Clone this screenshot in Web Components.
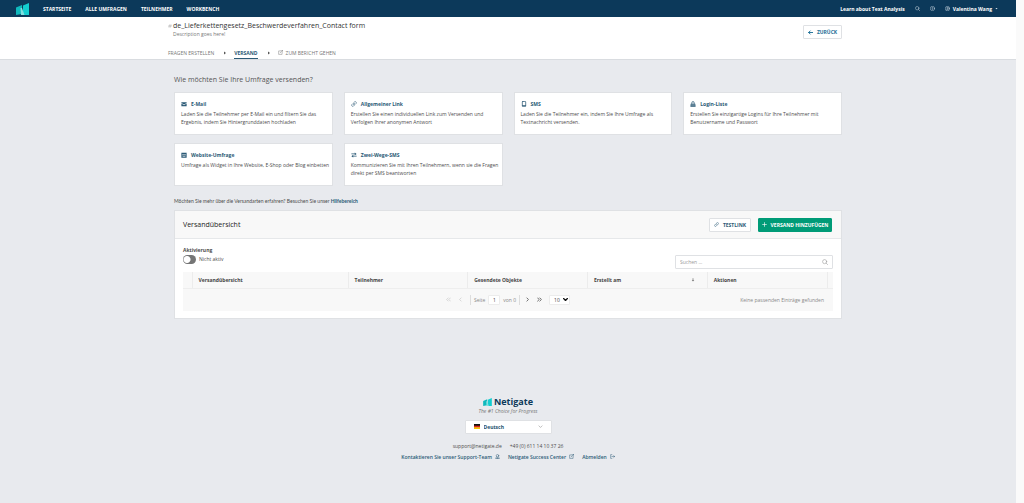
<!DOCTYPE html>
<html lang="de">
<head>
<meta charset="utf-8">
<meta name="viewport" content="width=device-width, initial-scale=1">
<title>Netigate – Versand</title>
<style>
html, body { margin: 0; min-height: 100%; }
body { font-family: "Open Sans", "Noto Sans", sans-serif; font-size: 5px; line-height: 8px; color: #4d4d4d; background: #e8eaee;
  --navy: #0c395a; --link: #2b5a76; --green: #009b77; --line: #dfe1e4; --soft: #f8f8f8; }
</style>
</head>
<body>
<survey-app></survey-app>
<script>
const define = (name, html, init) => {
  const template = document.createElement('template');
  template.innerHTML = html;
  customElements.define(name, class extends HTMLElement {
    constructor() {
      super();
      this.attachShadow({ mode: 'open' }).append(template.content.cloneNode(true));
    }
    connectedCallback() { if (init) init.call(this, this.shadowRoot); }
  });
};

const stroke = (width = 1.5) => `fill="none" stroke="currentColor" stroke-width="${width}" stroke-linecap="round" stroke-linejoin="round"`;
const S = stroke();
const icons = {
  mail: '<path fill="currentColor" d="M1 3h14v2L8 9.500 1 5zM1 6.500l7 4.500 7-4.500V14H1z"/>',
  link: `<g ${S}><path d="M6.500 9.500a3 3 0 0 0 4.200 0l3-3a3 3 0 0 0-4.200-4.200L8 3.800"/><path d="M9.500 6.500a3 3 0 0 0-4.200 0l-3 3a3 3 0 0 0 4.200 4.200L8 12.200"/></g>`,
  phone: `<g ${stroke(2)}><rect x="3.500" y="1" width="9" height="14" rx="1.500"/><path d="M4 12h8"/></g>`,
  lock: '<path fill="currentColor" d="M4 7V4.500a4 4 0 0 1 8 0V7h2l1 8H1l1-8zm2 0h4V4.500a2 2 0 0 0-4 0zM3 10v1h10v-1z"/>',
  site: '<path fill="currentColor" fill-rule="evenodd" d="M1 2h14v13H1zM3 5v1.500h10V5zM3 10v1h3l1 1.500h2l1-1.500h3v-1z"/>',
  swap: '<path fill="currentColor" d="M1 4h9V1.500L15 5l-5 3.500V6H1zM15 10H6V7.500L1 11l5 3.500V12h9z"/>',
  search: `<g ${S}><circle cx="7" cy="7" r="5.500"/><path d="m11 11 4 4"/></g>`,
  help: `<g ${S}><circle cx="8" cy="8" r="7"/><path d="M6 6.500a2 2 0 1 1 2 2.500m0 2.500v.2"/></g>`,
  user: `<g ${S}><circle cx="8" cy="8" r="7"/><circle cx="8" cy="6.500" r="2.300"/><path d="M4 13c1-3 7-3 8 0"/></g>`,
  support: `<g ${S}><circle cx="8" cy="5.500" r="4"/><path d="M5.500 9.500C2.500 10.500 2 12 2 14.500h12c0-2.500-.5-4-3.500-5M6.500 14v-2h3v2"/></g>`,
  ext: `<g ${S}><path d="M8 3H2v11h11V8M10 1h5v5M15 1 7 9"/></g>`,
  exit: `<g ${S}><path d="M6 2H2v12h4M6 8h9M12 5l3 3-3 3"/></g>`,
  back: `<path ${stroke(3)} d="M15 8H2M7 3 2 8l5 5"/>`,
  plus: `<path ${stroke(2)} d="M8 2v12M2 8h12"/>`,
  down: `<path ${stroke(2)} d="m3 6 5 5 5-5"/>`,
  downBold: `<path ${stroke(4)} d="m2 5 6 6 6-6"/>`,
  caret: '<path fill="currentColor" d="M2 5h12l-6 7z"/>',
  play: '<path fill="currentColor" d="M4 2v12l8-6z"/>',
  sort: '<path fill="currentColor" d="M6.500 1h3v7H13l-5 6-5-6h3.500z"/>',
  first: `<path ${stroke(2)} d="M7 3 2 8l5 5M14 3 9 8l5 5"/>`,
  prev: `<path ${stroke(2)} d="M10 3 5 8l5 5"/>`,
  next: `<path ${stroke(3)} d="m6 3 5 5-5 5"/>`,
  last: `<path ${stroke(3)} d="m2 3 5 5-5 5M9 3l5 5-5 5"/>`,
  mark: `<path ${S} d="M7 2 4 14M12 2 9 14M3 6h11M2 10h11"/>`
};
define('ui-icon', `<style>:host{display:inline-block;width:6px;height:6px;flex:none}svg{display:block;width:100%;height:100%}</style><svg viewBox="0 0 16 16" aria-hidden="true"></svg>`,
  function (root) { root.querySelector('svg').innerHTML = icons[this.getAttribute('name')]; });

define('brand-mark', `<style>:host{display:block;width:13px;height:12px;flex:none}svg{display:block;width:100%;height:100%}</style>
<svg viewBox="0 0 26 24" role="img" aria-label="Netigate"><path fill="#0fb9bd" d="M0 9 12 4v18L0 24z"/><path fill="#13cdd0" d="m14 5 12-5v24H14z"/><path fill="#7fdfe0" d="M9 10h3l5 14h-7z"/></svg>`);

define('top-bar', `<style>
:host{display:block;background:var(--navy);color:#fff;font-weight:700}
header{display:flex;align-items:center;height:17px;padding:0 18px 0 16px;box-sizing:border-box}
nav{display:flex;gap:14px;margin-left:14px;flex:1}
a{color:inherit;text-decoration:none;white-space:nowrap}
.tools{display:flex;align-items:center;gap:10px}
button{all:unset;display:flex;align-items:center;gap:3px;cursor:pointer}
.small{width:3px;height:3px}
ui-icon{width:5px;height:5px;color:#d4dfe7}
</style>
<header><brand-mark></brand-mark>
<nav><a href="#">STARTSEITE</a><a href="#">ALLE UMFRAGEN</a><a href="#">TEILNEHMER</a><a href="#">WORKBENCH</a></nav>
<div class="tools"><a href="#">Learn about Text Analysis</a><button aria-label="Suche"><ui-icon name="search"></ui-icon></button><button aria-label="Hilfe"><ui-icon name="help"></ui-icon></button><button><ui-icon name="user"></ui-icon>Valentina Wang<ui-icon class="small" name="caret"></ui-icon></button></div>
</header>`);

define('ui-button', `<style>
:host{display:block}
button{display:flex;align-items:center;justify-content:center;gap:4px;width:100%;height:14px;box-sizing:border-box;padding:0 5px;border:1px solid var(--line);border-radius:1px;background:#fff;color:var(--link);font:700 5px/8px "Open Sans",sans-serif;white-space:nowrap;cursor:pointer}
:host([primary]) button{background:var(--green);border-color:var(--green);color:#fff}
ui-icon{width:5px;height:5px}
</style><button><span></span><slot></slot></button>`,
function (root) { root.querySelector('span').outerHTML = `<ui-icon name="${this.getAttribute('icon')}"></ui-icon>`; });

define('survey-header', `<style>
:host{display:block;background:#fff;border-bottom:1px solid #d9dce0}
.wrap{max-width:680px;margin:0 auto;padding:4px 0 0;box-sizing:border-box}
.top{display:flex;justify-content:space-between;padding-right:6px;height:26px}
.title{display:flex;gap:1px;align-items:center}
.title ui-icon{width:4px;height:4px;color:#aaa}
h1{margin:0;font-weight:400;font-size:7px;line-height:10px;color:#333}
p{margin:0 0 0 5px;line-height:7px;color:#777}
ui-button{width:39px;margin-top:4px;--link:#1b6e96}
nav{display:flex;align-items:center;height:12px;color:#777}
nav a{color:inherit;text-decoration:none;display:flex;align-items:center;gap:3px;height:12px;box-sizing:border-box;border-bottom:1px solid transparent}
nav a[aria-current]{color:var(--link);border-color:var(--link);font-weight:700}
nav>ui-icon{width:4px;height:4px;margin:0 7px 0 9px;color:#555}
nav a ui-icon{width:5px;height:5px}
</style>
<div class="wrap"><div class="top"><div><div class="title"><ui-icon name="mark"></ui-icon><h1>de_Lieferkettengesetz_Beschwerdeverfahren_Contact form</h1></div><p>Description goes here!</p></div><ui-button icon="back">ZURÜCK</ui-button></div>
<nav><a href="#">FRAGEN ERSTELLEN</a><ui-icon name="play"></ui-icon><a href="#" aria-current="page">VERSAND</a><ui-icon name="play"></ui-icon><a href="#"><ui-icon name="ext"></ui-icon>ZUM BERICHT GEHEN</a></nav></div>`);

define('send-card', `<style>
:host{display:block;background:#fff;border:1px solid var(--line);box-sizing:border-box;padding:7px 0 6px 6px;min-height:43px}
h3{display:flex;align-items:center;gap:4px;margin:0 0 2px;font-size:5px;line-height:8px;font-weight:700;color:var(--link)}
p{margin:0;line-height:8px}
</style><h3><span></span><slot name="title"></slot></h3><p><slot></slot></p>`,
function (root) { root.querySelector('span').outerHTML = `<ui-icon name="${this.getAttribute('icon')}"></ui-icon>`; });

define('send-options', `<style>
:host{display:block}
h2{margin:0 0 7px;font-weight:400;font-size:7px;line-height:10px;color:#555}
.grid{display:grid;grid-template-columns:repeat(4,1fr);gap:8px 11px}
.more{margin:11px 0 5px;font-family:Lato,"Open Sans",sans-serif}
a{color:var(--link);font-weight:700;text-decoration:none}
</style>
<h2>Wie möchten Sie Ihre Umfrage versenden?</h2>
<div class="grid">
<send-card icon="mail"><span slot="title">E-Mail</span>Laden Sie die Teilnehmer per E-Mail ein und filtern Sie das Ergebnis, indem Sie Hintergrunddaten hochladen</send-card>
<send-card icon="link"><span slot="title">Allgemeiner Link</span>Erstellen Sie einen individuellen Link zum Versenden und Verfolgen Ihrer anonymen Antwort</send-card>
<send-card icon="phone"><span slot="title">SMS</span>Laden Sie die Teilnehmer ein, indem Sie Ihre Umfrage als Textnachricht versenden.</send-card>
<send-card icon="lock"><span slot="title">Login-Liste</span>Erstellen Sie einzigartige Logins für Ihre Teilnehmer mit Benutzername und Passwort</send-card>
<send-card icon="site"><span slot="title">Website-Umfrage</span>Umfrage als Widget in Ihre Website, E-Shop oder Blog einbetten</send-card>
<send-card icon="swap"><span slot="title">Zwei-Wege-SMS</span>Kommunizieren Sie mit Ihren Teilnehmern, wenn sie die Fragen direkt per SMS beantworten</send-card>
</div>
<p class="more">Möchten Sie mehr über die Versandarten erfahren? Besuchen Sie unser <a href="#">Hilfebereich</a></p>`);

define('page-picker', `<style>
:host{display:grid;grid-template-columns:1fr auto 1fr;align-items:center;height:22px;padding:0 9px;background:var(--soft);color:#888}
.pages{grid-column:2;display:flex;align-items:center;gap:5px}
button{all:unset;display:flex;cursor:pointer;color:#666;margin-right:2px}
button:disabled{color:#c4c4c4;margin-right:2px}
ui-icon{width:5px;height:5px}
label{display:flex;align-items:center;gap:3px}
.bar{border:solid #ddd;border-width:0 1px;padding:0 3px;line-height:6px;display:flex;align-items:center;gap:3px}
input,select{font:inherit;box-sizing:border-box;border:1px solid #ececec;background:#fff;color:#444;height:10px;margin:0;padding:0;border-radius:1px}
input{width:12px;text-align:center}
.size{position:relative}
select{appearance:none;width:21px;padding:0 4px}
.size ui-icon{position:absolute;right:2px;color:#111;pointer-events:none}
.empty{text-align:right}
</style>
<div class="pages"><button disabled aria-label="Erste Seite"><ui-icon name="first"></ui-icon></button><button disabled aria-label="Vorherige Seite"><ui-icon name="prev"></ui-icon></button>
<div class="bar"><label>Seite <input value="1"></label><span>von 0</span></div>
<button aria-label="Nächste Seite"><ui-icon name="next"></ui-icon></button><button aria-label="Letzte Seite"><ui-icon name="last"></ui-icon></button>
<label class="size"><select aria-label="Einträge pro Seite"><option>10</option><option>25</option></select><ui-icon name="downBold"></ui-icon></label></div>
<div class="empty">Keine passenden Einträge gefunden</div>`);

define('send-overview', `<style>
:host{display:block;background:#fff;border:1px solid var(--line);box-sizing:border-box}
header{display:flex;align-items:center;gap:7px;height:28px;box-sizing:border-box;padding:0 9px 0 8px;background:var(--soft);border-bottom:1px solid #e6e8ea}
h2{margin:0;flex:1;font-size:7px;line-height:10px;font-weight:400;color:#222}
.test{width:42px}.add{width:74px}
.body{padding:7px 8px}
.tools{display:flex;justify-content:space-between;align-items:flex-end;height:23px;margin-bottom:3px}
fieldset{border:0;margin:0;padding:0;align-self:flex-start}
legend{padding:0;font-weight:700;line-height:8px}
.switch{display:flex;align-items:center;gap:3px;height:10px}
.switch input{appearance:none;width:13px;height:9px;margin:0;border-radius:5px;background:radial-gradient(circle at 4px 50%,#fff 3px,transparent 4px),#757575}
.search{display:flex;align-items:center;width:158px;height:14px;box-sizing:border-box;border:1px solid var(--line);border-radius:1px;padding:0 4px}
.search input{flex:1;min-width:0;border:0;padding:0;outline:0;background:none;font:inherit}
.search input::placeholder{color:#999}
.search ui-icon{color:#999}
table{width:100%;table-layout:fixed;border-collapse:collapse;background:var(--soft)}
th{height:16px;padding:0 7px 0 6px;box-sizing:border-box;text-align:left;font-weight:700;border-right:1px solid #ececec;border-bottom:1px solid #eee;color:#444}
th:last-child{border-right:0}
.cell{display:flex;justify-content:space-between;align-items:center}
.cell ui-icon{width:4px;height:4px;margin-right:5px;color:#777}
</style>
<header><h2>Versandübersicht</h2><ui-button class="test" icon="link">TESTLINK</ui-button><ui-button class="add" primary icon="plus">VERSAND HINZUFÜGEN</ui-button></header>
<div class="body"><div class="tools"><fieldset><legend>Aktivierung</legend><label class="switch"><input type="checkbox" role="switch">Nicht aktiv</label></fieldset>
<label class="search"><input type="search" placeholder="Suchen ..." aria-label="Suchen"><ui-icon name="search"></ui-icon></label></div>
<table><colgroup><col style="width:9px"><col style="width:24%"><col><col><col><col><col style="width:6px"></colgroup>
<thead><tr><th style="padding:0"></th><th>Versandübersicht</th><th>Teilnehmer</th><th>Gesendete Objekte</th><th><div class="cell">Erstellt am<ui-icon name="sort"></ui-icon></div></th><th>Aktionen</th><th style="padding:0"></th></tr></thead></table>
<page-picker></page-picker></div>`);

define('app-footer', `<style>
:host{display:flex;flex-direction:column;align-items:center;padding-top:77px}
.brand{display:flex;align-items:center;gap:2px;font-size:9px;line-height:12px;font-weight:700;color:var(--navy)}
brand-mark{width:9px;height:8px}
em{line-height:6px;color:#777}
.lang{display:flex;align-items:center;gap:4px;width:87px;height:14px;margin:6px 0 8px;box-sizing:border-box;border:1px solid var(--line);border-radius:1px;background:#fff;padding:0 8px;color:var(--link)}
.lang svg{width:6px;height:5px;flex:none}
.lang ui-icon{width:5px;height:5px;color:#999}
select{appearance:none;flex:1;min-width:0;border:0;background:none;font:inherit;font-weight:700;color:#22506d;padding:0}
.row{display:flex;gap:8px;line-height:8px}
.links{margin-top:3px;gap:8px;font-weight:600}
a{color:inherit;text-decoration:none;display:flex;align-items:center;gap:3px}
.links a{color:var(--link)}
.links ui-icon{width:5px;height:5px}
</style>
<div class="brand"><brand-mark></brand-mark>Netigate</div><em>The #1 Choice for Progress</em>
<label class="lang"><svg viewBox="0 0 6 5" aria-hidden="true"><path fill="#111" d="M0 0h6v2H0z"/><path fill="#d8261c" d="M0 1.700h6v2H0z"/><path fill="#f5c400" d="M0 3.400h6V5H0z"/></svg><select aria-label="Sprache"><option>Deutsch</option><option>English</option></select><ui-icon name="down"></ui-icon></label>
<div class="row"><a href="mailto:support@netigate.de">support@netigate.de</a><a href="tel:+4961114103726">+49 (0) 611 14 10 37 26</a></div>
<div class="row links"><a href="#">Kontaktieren Sie unser Support-Team<ui-icon name="support"></ui-icon></a><a href="#">Netigate Success Center<ui-icon name="ext"></ui-icon></a><a href="#">Abmelden<ui-icon name="exit"></ui-icon></a></div>`);

define('survey-app', `<style>
:host{display:grid;grid-template-columns:1fr 8px;min-height:100vh}
.gutter{background:#fafafa}
main{max-width:668px;margin:0 auto;padding-top:15px}
</style>
<div><top-bar></top-bar><survey-header></survey-header><main><send-options></send-options><send-overview></send-overview></main><app-footer></app-footer></div><div class="gutter"></div>`);
</script>
</body>
</html>
